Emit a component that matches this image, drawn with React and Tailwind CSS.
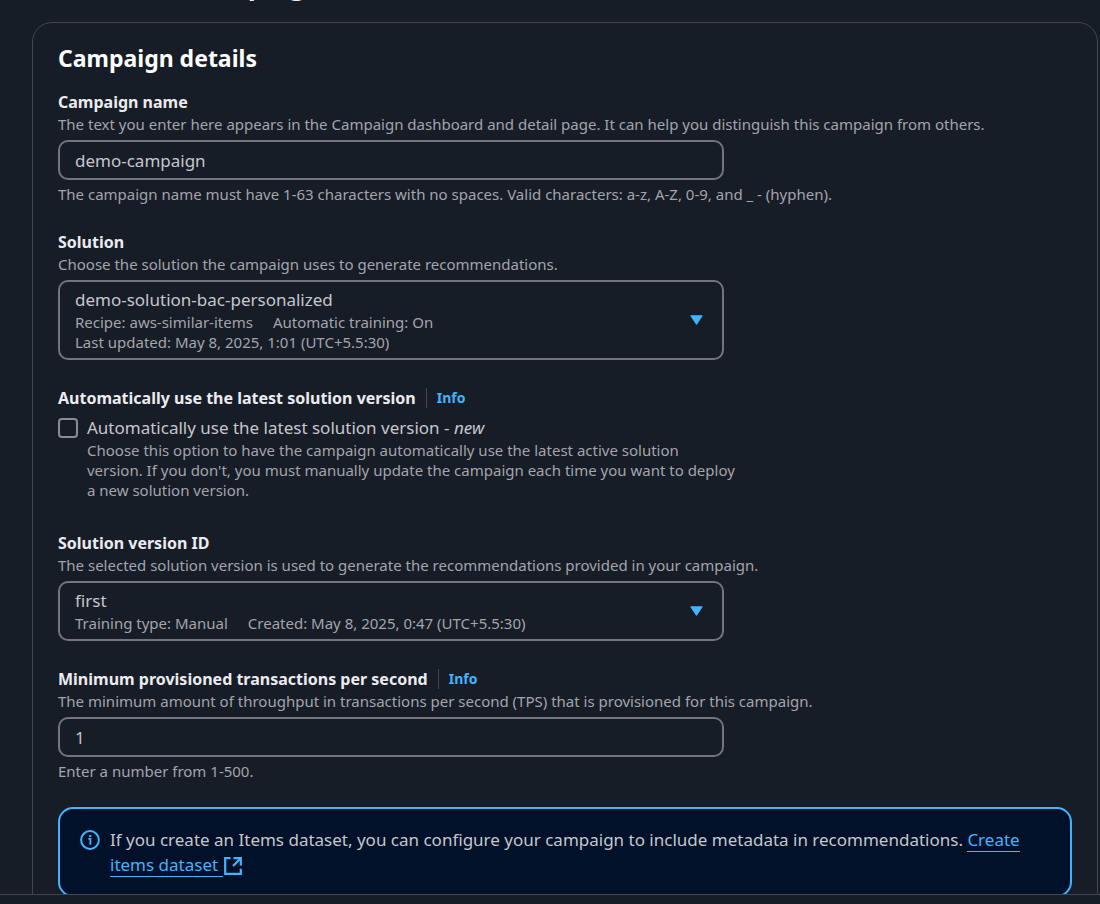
import { useState } from 'react'

// ── Icons ────────────────────────────────────────────────────────────────────
function InfoIcon() {
  return (
    <svg
      viewBox="0 0 20 20"
      className="h-5 w-5 shrink-0"
      fill="none"
      stroke="currentColor"
      aria-hidden="true"
    >
      <circle cx="10" cy="10" r="8.9" strokeWidth="2" />
      <path d="M8.4 8.8H10.4V14.8" strokeWidth="1.8" />
      <path d="M9.2 6H11.3" strokeWidth="2" />
    </svg>
  )
}

function ExternalIcon() {
  return (
    <svg
      viewBox="0 0 18 18"
      className="ml-[1px] inline h-[18px] w-[18px]"
      fill="none"
      stroke="currentColor"
      strokeWidth="2.2"
      aria-hidden="true"
    >
      <path d="M6.5 1.2H1.2V16.8H16.8V11.8" />
      <path d="M9.5 1.2H16.8V8.5" />
      <path d="M16.6 1.4L9 9" />
    </svg>
  )
}

function CaretIcon() {
  return (
    <svg viewBox="0 0 13 10" className="h-[10px] w-[13px] shrink-0" aria-hidden="true">
      <path
        d="M0.8 0.8H12.2L6.5 9.4Z"
        fill="#42b4ff"
        stroke="#42b4ff"
        strokeWidth="1"
        strokeLinejoin="round"
      />
    </svg>
  )
}

// ── Form fields ──────────────────────────────────────────────────────────────
function InfoLink() {
  return (
    <a
      href="#info"
      className="ml-[10px] border-l border-[#424650] pl-[10px] text-sm leading-5 font-bold text-[#42b4ff]"
    >
      Info
    </a>
  )
}

function Field({ id, label, info, description, constraint, children }) {
  return (
    <div>
      <div className="flex items-center text-base leading-6">
        <label htmlFor={id} className="font-bold text-[#ebebf0]">
          {label}
        </label>
        {info && <InfoLink />}
      </div>
      <p className="mb-[6px] text-[15px] leading-5 text-[#a4a4ad]">{description}</p>
      {children}
      {constraint && (
        <p className="mt-1 text-[15px] leading-5 text-[#a4a4ad]">{constraint}</p>
      )}
    </div>
  )
}

function TextInput({ id, value, onChange }) {
  return (
    <input
      id={id}
      type="text"
      value={value}
      onChange={(e) => onChange(e.target.value)}
      className="block h-10 w-full max-w-[666px] rounded-[10px] border-2 border-[#72747e] bg-[#161d26] px-[15px] text-[17px] text-[#c6c6cd] outline-none focus:border-[#42b4ff]"
    />
  )
}

// The select fills the box, its details sit under the chosen option
function DetailSelect({ id, option, details, className }) {
  return (
    <div className="grid w-full max-w-[666px] grid-cols-1">
      <select
        id={id}
        className={`col-start-1 row-start-1 w-full appearance-none rounded-[10px] border-2 border-[#72747e] bg-[#161d26] px-[15px] pt-[6px] text-[17px] leading-6 text-[#c6c6cd] outline-none focus:border-[#42b4ff] ${className}`}
      >
        <option>{option}</option>
      </select>
      <div className="pointer-events-none z-10 col-start-1 row-start-1 flex items-center justify-between pr-[21px] pl-[17px]">
        <div className="pt-8 pb-2 text-[15px] leading-5 text-[#a4a4ad]">
          {details.map((row) => (
            <div key={row[0]} className="flex gap-5">
              {row.map((item) => (
                <span key={item}>{item}</span>
              ))}
            </div>
          ))}
        </div>
        <CaretIcon />
      </div>
    </div>
  )
}

// ── App ──────────────────────────────────────────────────────────────────────
export default function App() {
  const [name, setName] = useState('demo-campaign')
  const [tps, setTps] = useState('1')
  const [autoUpdate, setAutoUpdate] = useState(false)

  return (
    <div className="flex h-screen flex-col overflow-hidden bg-[#161d26] font-['Noto_Sans',sans-serif] text-[#c6c6cd]">
      <main className="min-h-0 flex-1 overflow-hidden pr-[2px] pl-8">
        <h1 className="-mt-[33px] mb-[19px] text-[27px] leading-9 font-bold text-[#ebebf0]">
          Create new campaign
        </h1>

        <section className="rounded-[20px] border border-[#424650] px-[25px] pt-[19px] pb-6">
          <h2 className="mb-4 text-[23px] leading-8 font-bold text-white">Campaign details</h2>

          <form className="flex flex-col gap-[26px]" onSubmit={(e) => e.preventDefault()}>
            <Field
              id="name"
              label="Campaign name"
              description="The text you enter here appears in the Campaign dashboard and detail page. It can help you distinguish this campaign from others."
              constraint="The campaign name must have 1-63 characters with no spaces. Valid characters: a-z, A-Z, 0-9, and _ - (hyphen)."
            >
              <TextInput id="name" value={name} onChange={setName} />
            </Field>

            <Field
              id="solution"
              label="Solution"
              description="Choose the solution the campaign uses to generate recommendations."
            >
              <DetailSelect
                id="solution"
                option="demo-solution-bac-personalized"
                details={[
                  ['Recipe: aws-similar-items', 'Automatic training: On'],
                  ['Last updated: May 8, 2025, 1:01 (UTC+5.5:30)'],
                ]}
                className="pb-[46px]"
              />
            </Field>

            <fieldset className="pb-[5px]">
              <legend className="mb-[6px] flex items-center text-base leading-6 font-bold text-[#ebebf0]">
                Automatically use the latest solution version
                <InfoLink />
              </legend>
              <div className="flex gap-[9px]">
                <input
                  id="auto"
                  type="checkbox"
                  checked={autoUpdate}
                  onChange={(e) => setAutoUpdate(e.target.checked)}
                  aria-describedby="auto-description"
                  className="mt-[2px] h-5 w-5 shrink-0 appearance-none rounded-[4px] border-2 border-[#8c8c94] checked:border-[#42b4ff] checked:bg-[#42b4ff]"
                />
                <div>
                  <label htmlFor="auto" className="block text-[17px] leading-6">
                    Automatically use the latest solution version - <i>new</i>
                  </label>
                  <p id="auto-description" className="text-[15px] leading-5 text-[#a4a4ad]">
                    Choose this option to have the campaign automatically use the latest active
                    solution
                    <br />
                    version. If you don't, you must manually update the campaign each time you want
                    to deploy
                    <br />a new solution version.
                  </p>
                </div>
              </div>
            </fieldset>

            <Field
              id="version"
              label="Solution version ID"
              description="The selected solution version is used to generate the recommendations provided in your campaign."
            >
              <DetailSelect
                id="version"
                option="first"
                details={[['Training type: Manual', 'Created: May 8, 2025, 0:47 (UTC+5.5:30)']]}
                className="pb-[26px]"
              />
            </Field>

            <Field
              id="tps"
              label="Minimum provisioned transactions per second"
              info
              description="The minimum amount of throughput in transactions per second (TPS) that is provisioned for this campaign."
              constraint="Enter a number from 1-500."
            >
              <TextInput id="tps" value={tps} onChange={setTps} />
            </Field>

            <div className="flex gap-[10px] rounded-[15px] border-2 border-[#42b4ff] bg-[#001129] px-5 py-[18px] text-[17px] leading-[25px]">
              <span className="flex h-[25px] items-center text-[#42b4ff]">
                <InfoIcon />
              </span>
              <p>
                If you create an Items dataset, you can configure your campaign to include metadata
                in recommendations.{' '}
                <a href="#create-dataset" className="text-[#42b4ff]">
                  <span className="border-b border-[#42b4ff]">Create items dataset&nbsp;</span>
                  <ExternalIcon />
                </a>
              </p>
            </div>
          </form>
        </section>
      </main>
      <footer className="h-[10px] shrink-0 border-t border-[#424650]" />
    </div>
  )
}
